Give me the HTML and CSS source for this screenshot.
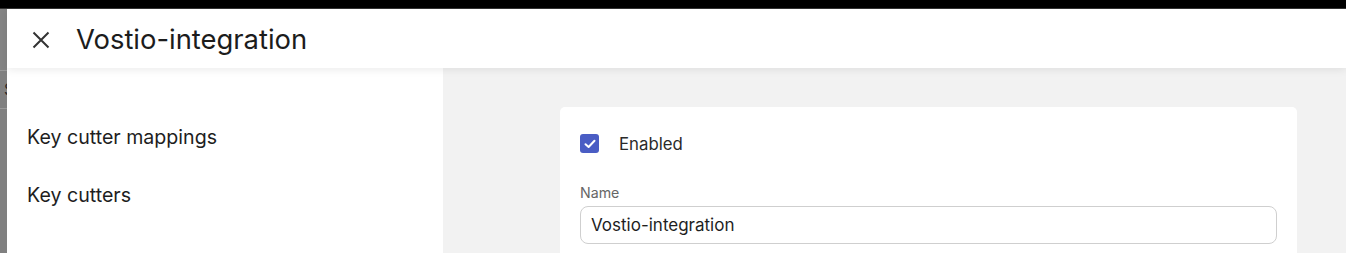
FILE: index.html
```html
<!DOCTYPE html>
<html lang="en">
<head>
<meta charset="utf-8">
<title>Vostio-integration</title>
<link rel="stylesheet" href="styles.css">
</head>
<body>
<div class="topbar"></div>
<div class="main">
  <div class="backdrop">
    <div class="bd-head"></div>
    <div class="bd-row">S</div>
    <div class="bd-rest"></div>
  </div>
  <div class="drawer">
    <header class="drawer-header">
      <button class="close" aria-label="Close">
        <svg width="18" height="18" viewBox="0 0 18 18"><path d="M1.5 1.5 L16.5 16.5 M16.5 1.5 L1.5 16.5" stroke="#333" stroke-width="2" fill="none"/></svg>
      </button>
      <h1 class="title">Vostio-integration</h1>
    </header>
    <div class="drawer-body">
      <nav class="nav">
        <div class="nav-item">Key cutter mappings</div>
        <div class="nav-item">Key cutters</div>
      </nav>
      <section class="content">
        <div class="card">
          <label class="check-row">
            <span class="checkbox">
              <svg width="12" height="10" viewBox="0 0 12 10"><path d="M1.5 5.2 L4.6 8 L10.5 1.8" stroke="#fff" stroke-width="2" fill="none" stroke-linecap="round" stroke-linejoin="round"/></svg>
            </span>
            <span class="check-label">Enabled</span>
          </label>
          <div class="field">
            <div class="field-label">Name</div>
            <div class="input">Vostio-integration</div>
          </div>
        </div>
      </section>
    </div>
  </div>
</div>
</body>
</html>
```

FILE: styles.css
```css
* { box-sizing: border-box; }
html, body {
  margin: 0;
  padding: 0;
  width: 1346px;
  height: 253px;
  overflow: hidden;
  background: #fff;
  font-family: Inter, "Noto Sans", sans-serif;
  color: #222;
}
.topbar {
  height: 9px;
  background: #000;
  border-bottom: 1px solid #333;
}
.main {
  display: flex;
  height: 244px;
  overflow: hidden;
}
.backdrop {
  width: 7px;
  flex-shrink: 0;
  background: #808080;
  display: flex;
  flex-direction: column;
  overflow: hidden;
}
.bd-head {
  height: 62px;
  flex-shrink: 0;
  background: #848484;
  border-bottom: 1px solid #9a9a9a;
}
.bd-row {
  height: 38px;
  flex-shrink: 0;
  border-bottom: 1px solid #9a9a9a;
  font-size: 16px;
  line-height: 37px;
  padding-left: 4px;
  color: #2a2a2a;
  white-space: nowrap;
}
.bd-rest { flex: 1; }
.drawer {
  flex: 1;
  display: flex;
  flex-direction: column;
  min-width: 0;
}
.drawer-header {
  height: 59px;
  flex-shrink: 0;
  background: #fff;
  display: flex;
  align-items: center;
  padding-left: 25px;
  gap: 26px;
  box-shadow: 0 2px 8px rgba(0, 0, 0, 0.08);
  position: relative;
  z-index: 1;
}
.close {
  border: 0;
  background: none;
  padding: 0;
  width: 18px;
  height: 18px;
  display: flex;
  cursor: pointer;
  margin-top: 2px;
}
.title {
  margin: 0;
  font-size: 27.4px;
  font-weight: 400;
  color: #1c1c1c;
}
.drawer-body {
  flex: 1;
  display: flex;
  min-height: 0;
}
.nav {
  width: 436px;
  flex-shrink: 0;
  background: #fff;
  padding-top: 40px;
}
.nav-item {
  padding: 17px 20px;
  font-size: 19.6px;
  line-height: 24px;
  color: #1e1e1e;
}
.content {
  flex: 1;
  background: #f2f2f2;
  padding: 39px 49px 0 117px;
}
.card {
  background: #fff;
  border-radius: 5px;
  padding: 20px 20px 20px;
  height: 200px;
}
.check-row {
  display: flex;
  align-items: center;
  gap: 20px;
  height: 33px;
}
.checkbox {
  width: 19px;
  height: 19px;
  border-radius: 3px;
  background: #4a5dc4;
  display: flex;
  align-items: center;
  justify-content: center;
}
.check-label {
  font-size: 16.8px;
  line-height: 20px;
  color: #2a2a2a;
}
.field {
  margin-top: 23px;
  display: flex;
  flex-direction: column;
  gap: 3px;
}
.field-label {
  font-size: 14.2px;
  line-height: 20px;
  color: #666;
}
.input {
  height: 38px;
  border: 1px solid #cfcfcf;
  border-radius: 8px;
  padding: 0 10px;
  font-size: 17px;
  line-height: 36px;
  color: #1e1e1e;
}
```
